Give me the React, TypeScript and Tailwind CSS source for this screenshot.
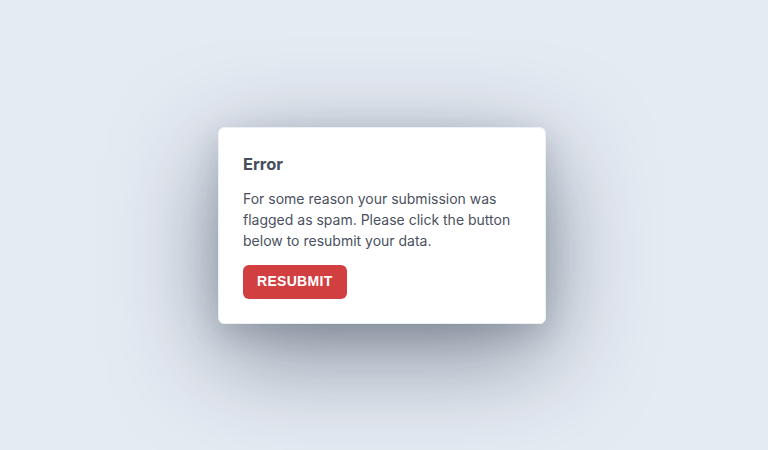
export default function App() {
  return (
    <div className="flex h-[450px] w-[768px] items-center justify-center bg-[#e5ebf3] pr-1" style={{ fontFamily: "Inter, 'Noto Sans', sans-serif" }}>
      {/* Error card */}
      <div className="w-[328px] rounded-md border border-[#eceff3] bg-white p-6 shadow-[0_30px_100px_rgba(30,41,59,0.5),0_10px_30px_rgba(30,41,59,0.15)]">
        <h2 className="text-[16.5px] font-bold leading-6 text-[#464d5c]">Error</h2>
        <p className="mt-3 text-[14px] leading-[21px] text-[#4a5160]">
          For some reason your submission was flagged as spam. Please click the button below to resubmit your data.
        </p>
        <button className="mt-[14px] h-[34px] rounded-md bg-[#d13f41] px-[14px] text-[14px] font-bold tracking-[0.3px] text-white" style={{ fontFamily: "'Liberation Sans', Arial, sans-serif" }}>
          RESUBMIT
        </button>
      </div>
    </div>
  );
}
